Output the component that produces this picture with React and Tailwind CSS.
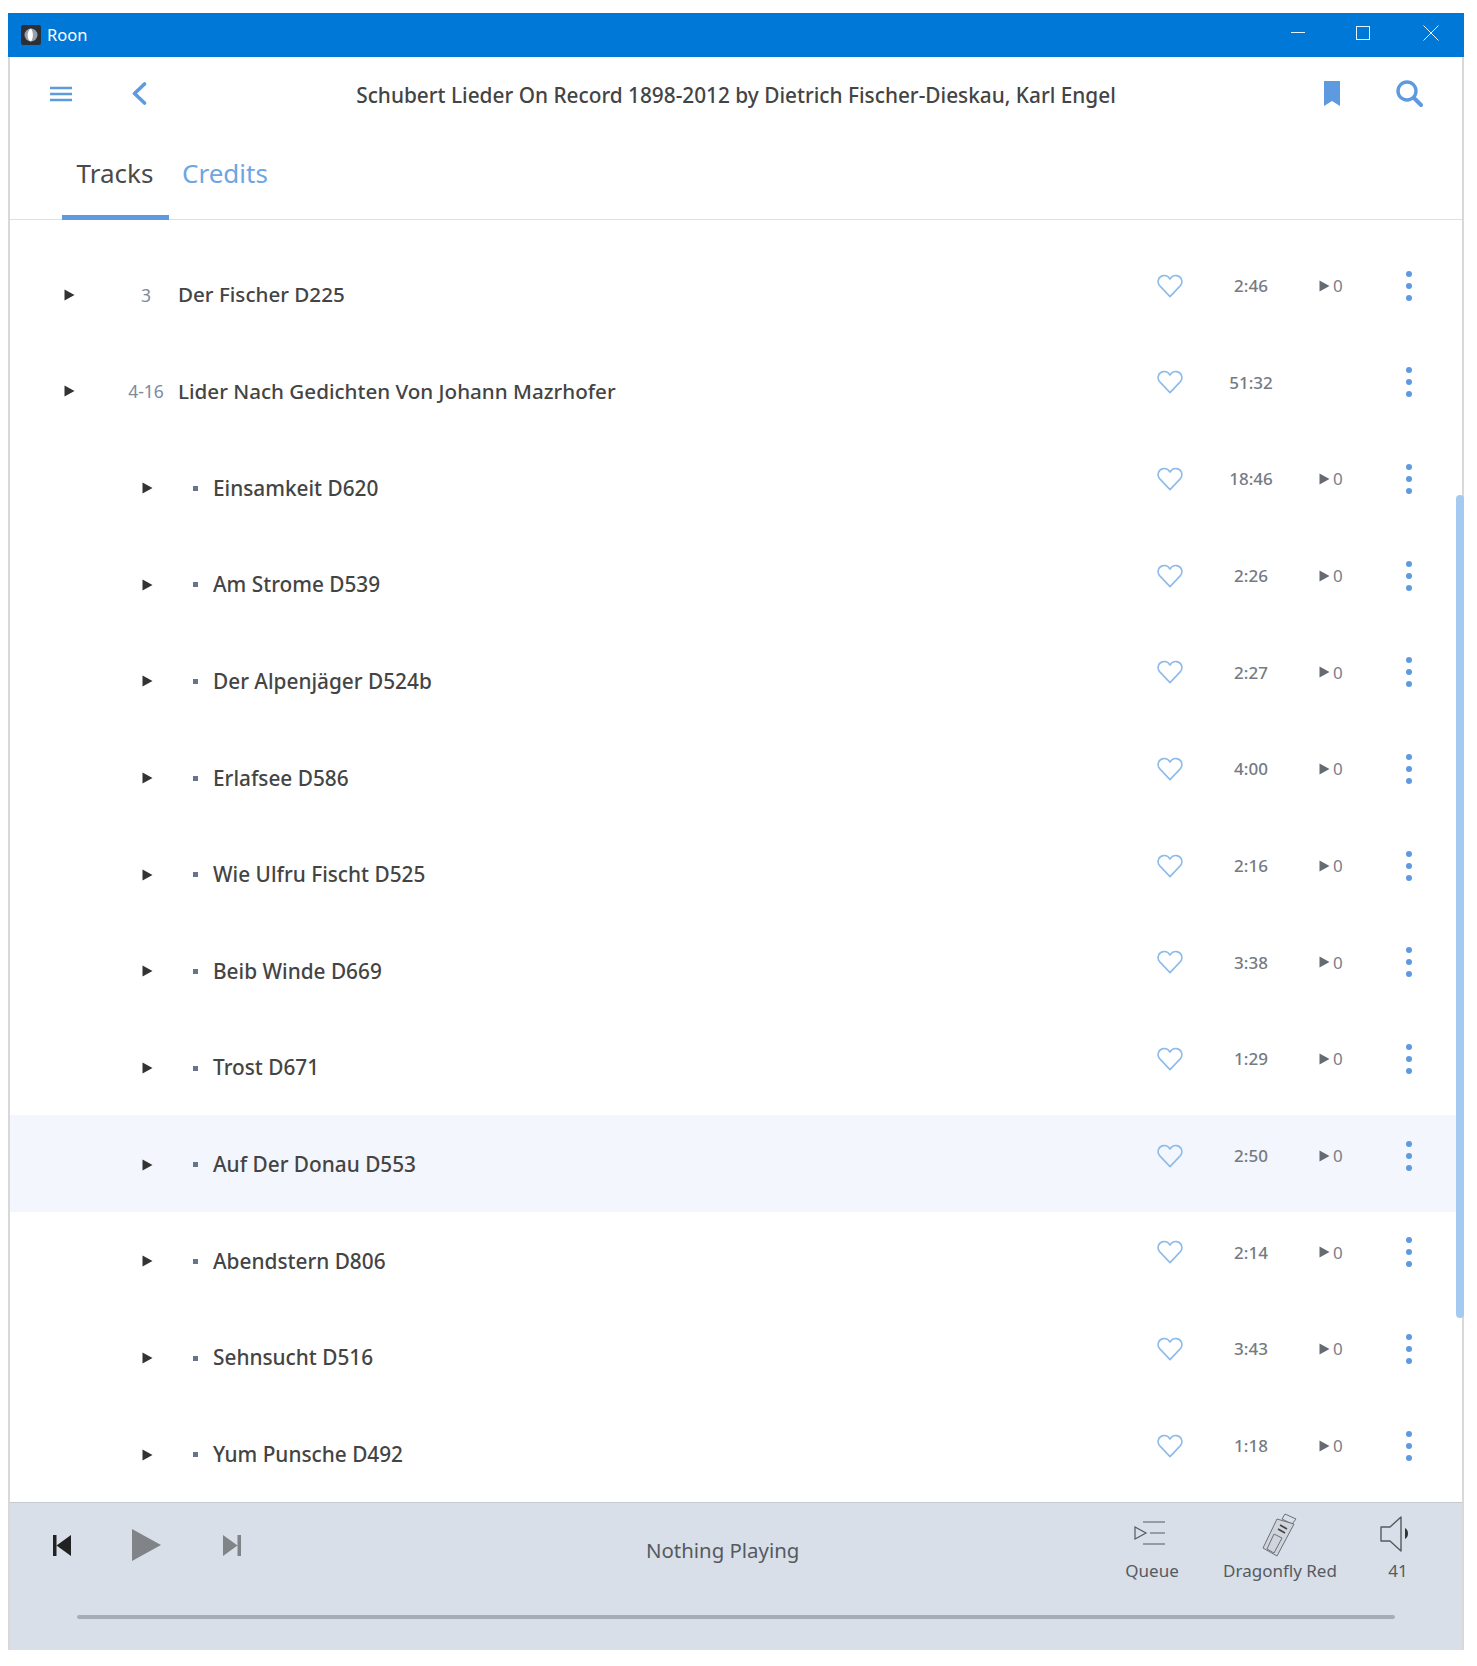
const tracks = [
    { no: '3', title: 'Der Fischer D225', time: '2:46', plays: true },
    { no: '4-16', title: 'Lider Nach Gedichten Von Johann Mazrhofer', time: '51:32', plays: false },
    { sub: true, title: 'Einsamkeit D620', time: '18:46', plays: true },
    { sub: true, title: 'Am Strome D539', time: '2:26', plays: true },
    { sub: true, title: 'Der Alpenjäger D524b', time: '2:27', plays: true },
    { sub: true, title: 'Erlafsee D586', time: '4:00', plays: true },
    { sub: true, title: 'Wie Ulfru Fischt D525', time: '2:16', plays: true },
    { sub: true, title: 'Beib Winde D669', time: '3:38', plays: true },
    { sub: true, title: 'Trost D671', time: '1:29', plays: true },
    { sub: true, title: 'Auf Der Donau D553', time: '2:50', plays: true, active: true },
    { sub: true, title: 'Abendstern D806', time: '2:14', plays: true },
    { sub: true, title: 'Sehnsucht D516', time: '3:43', plays: true },
    { sub: true, title: 'Yum Punsche D492', time: '1:18', plays: true },
];

function Triangle({ className }) {
    return (
        <svg viewBox="0 0 11 12" className={className} fill="currentColor">
            <path d="M0.5 0.5 L10.5 6 L0.5 11.5 Z" />
        </svg>
    );
}

function Heart() {
    return (
        <svg viewBox="0 0 26 24" className="w-[26px] h-[24px] text-[#8dbbea]" fill="none" stroke="currentColor" strokeWidth="1.6" strokeLinejoin="round">
            <path d="M13 22.6 L2.6 11.6 C-0.2 8.4 1 2.4 6.4 1.6 C9.2 1.2 11.6 2.6 13 5 C14.4 2.6 16.8 1.2 19.6 1.6 C25 2.4 26.2 8.4 23.4 11.6 Z" />
        </svg>
    );
}

function TrackRow({ track }) {
    return (
        <div className={`flex items-center h-[96.67px] pt-[3px] ${track.active ? 'bg-[#f3f6fc]' : ''}`}>
            {track.sub ? (
                <>
                    <Triangle className="w-[11px] h-[12px] ml-[132px] text-[#333333]" />
                    <span className="w-[5px] h-[5px] ml-[40px] bg-[#66758c]" />
                    <span className="ml-[15px] text-[20.8px] font-medium text-[#444444]">{track.title}</span>
                </>
            ) : (
                <>
                    <Triangle className="w-[11px] h-[12px] ml-[54px] text-[#333333]" />
                    <span className="w-[60px] ml-[41px] text-center text-[17.5px] text-[#7d8a9c]">{track.no}</span>
                    <span className="ml-[2px] text-[20.6px] font-medium text-[#444444]">{track.title}</span>
                </>
            )}
            <div className="ml-auto flex items-center mb-[18px]">
                <Heart />
                <span className="w-[136px] text-center text-[17px] font-medium text-[#757a83]">{track.time}</span>
                <span className="w-[24px] flex items-center gap-[3px] text-[17px] text-[#7a7f88]">
                    {track.plays && (
                        <>
                            <Triangle className="w-[11px] h-[12px] shrink-0 text-[#666b73]" />
                            0
                        </>
                    )}
                </span>
                <div className="ml-[63px] mr-[50px] flex flex-col gap-[6px]">
                    <span className="w-[6px] h-[6px] rounded-full bg-[#5e9ae0]" />
                    <span className="w-[6px] h-[6px] rounded-full bg-[#5e9ae0]" />
                    <span className="w-[6px] h-[6px] rounded-full bg-[#5e9ae0]" />
                </div>
            </div>
        </div>
    );
}

export default function App() {
    return (
        <div className="w-[1477px] h-[1666px] bg-white pl-[8px] pt-[13px] font-['Noto_Sans',sans-serif]">
            <div className="relative w-[1456px] h-[1637px] flex flex-col border-x-2 border-x-[#d8d8d8] border-b border-b-[#d8dfe8]">
                {/* title bar */}
                <div className="-mx-[2px] h-[44px] shrink-0 flex items-center bg-[#0078d7] text-white">
                    <svg viewBox="0 0 20 20" className="w-[20px] h-[20px] ml-[13px]">
                        <rect width="20" height="20" rx="2" fill="#2a2f38" />
                        <circle cx="10" cy="10" r="6.5" fill="#9aa0a8" />
                        <path d="M10 3.5 C6 5 5 15 10 16.5 C12.5 13 12.5 7 10 3.5 Z" fill="#ffffff" />
                    </svg>
                    <span className="ml-[6px] text-[16.5px]">Roon</span>
                    <svg viewBox="0 0 148 16" className="w-[148px] h-[16px] ml-auto mr-[25px] mb-[4px]" fill="none" stroke="#ffffff" strokeOpacity="0.9" strokeWidth="1">
                        <path d="M0 7.5 H14" />
                        <rect x="65.5" y="1.5" width="13" height="13" />
                        <path d="M132.5 0.5 L147.5 15.5 M147.5 0.5 L132.5 15.5" />
                    </svg>
                </div>

                {/* header */}
                <div className="h-[78px] shrink-0 flex items-center">
                    <svg viewBox="0 0 22 16" className="w-[22px] h-[16px] ml-[40px] mb-[5px]" stroke="#5e9ae0" strokeWidth="2.4">
                        <path d="M0 2 H22 M0 8 H22 M0 14 H22" />
                    </svg>
                    <svg viewBox="0 0 15 23" className="w-[15px] h-[23px] ml-[60px] mb-[5px]" fill="none" stroke="#5e9ae0" strokeWidth="3.6" strokeLinecap="round" strokeLinejoin="round">
                        <path d="M12.5 2 L2.5 11.5 L12.5 21" />
                    </svg>
                    <div className="flex-1 text-center text-[20.8px] font-medium text-[#444444] pl-[111px] pr-[110px] whitespace-nowrap">
                        Schubert Lieder On Record 1898-2012 by Dietrich Fischer-Dieskau, Karl Engel
                    </div>
                    <svg viewBox="0 0 16 25" className="w-[16px] h-[25px] mb-[6px]" fill="#5e9ae0">
                        <path d="M0 0 H16 V25 L8 20 L0 25 Z" />
                    </svg>
                    <svg viewBox="0 0 27 27" className="w-[27px] h-[27px] ml-[56px] mr-[39px] mb-[6px]" fill="none" stroke="#5e9ae0" strokeLinecap="round">
                        <circle cx="11" cy="11" r="9" strokeWidth="3.4" />
                        <path d="M18 18 L25 25" strokeWidth="4" />
                    </svg>
                </div>

                {/* tabs */}
                <div className="h-[85px] shrink-0 flex border-b border-[#dcdfe3]">
                    <div className="ml-[52px] w-[107px] h-[85px] flex justify-center items-center pb-[4px] pr-[1px] border-b-[5px] border-[#5e9ae0] text-[26px] text-[#4a4a4a]">Tracks</div>
                    <div className="ml-[13px] h-[85px] flex items-center pb-[9px] text-[26px] text-[#6ea5e3]">Credits</div>
                </div>

                {/* track list */}
                <div className="flex-1 overflow-hidden pt-[25px]">
                    {tracks.map((track) => (
                        <TrackRow key={track.title} track={track} />
                    ))}
                </div>
                <div className="absolute right-[-2px] top-[482px] w-[8px] h-[823px] rounded-[4px] bg-[#a5caf1]" />

                {/* player bar */}
                <div className="h-[147px] shrink-0 bg-[#d8dfe8] border-t border-[#c5cad2]">
                    <div className="h-[106px] flex items-center">
                        <svg viewBox="0 0 18 21" className="w-[18px] h-[21px] ml-[43px] mb-[22px]" fill="#222222">
                            <path d="M0 0 H3.5 V21 H0 Z M18 0 V21 L3.5 10.5 Z" />
                        </svg>
                        <svg viewBox="0 0 29 32" className="w-[29px] h-[32px] ml-[61px] mb-[22px]" fill="#808488">
                            <path d="M0 0 L29 16 L0 32 Z" />
                        </svg>
                        <svg viewBox="0 0 18 21" className="w-[18px] h-[21px] ml-[62px] mb-[22px]" fill="#808488">
                            <path d="M14.5 0 H18 V21 H14.5 Z M0 0 V21 L14.5 10.5 Z" />
                        </svg>
                        <div className="ml-[405px] mb-[12px] text-[20.4px] text-[#555a61] whitespace-nowrap">Nothing Playing</div>
                        <div className="ml-auto self-start mt-[7px] flex items-start text-[17px] leading-[25px] text-[#555a61]">
                            <div className="flex flex-col items-center w-[70px]">
                                <div className="h-[48px] flex items-center">
                                    <svg viewBox="0 0 32 24" className="w-[32px] h-[24px] mb-[2px] mr-[4px]" fill="none" stroke="#555a61" strokeWidth="1.2">
                                        <path d="M9 1 H31 M16 12 H31 M9 23 H31 M1 6 L12 12 L1 18 Z" />
                                    </svg>
                                </div>
                                Queue
                            </div>
                            <div className="flex flex-col items-center w-[114px] ml-[36px]">
                                <div className="h-[48px] flex items-center">
                                    <svg viewBox="0 0 36 46" className="w-[36px] h-[46px]" fill="none" stroke="#6b7077" strokeWidth="1">
                                        <path d="M23 3 L34 8 L30 13 L20 8 Z" />
                                        <path d="M15 8 L32 13 L15 45 L1 37 Z" fill="#d0d5dd" />
                                        <path d="M12 23 L20 27 L12 42 L5 38 Z" />
                                        <path d="M18 14 L25 18 M16 18 L23 22" stroke="#444444" strokeWidth="1.6" />
                                    </svg>
                                </div>
                                Dragonfly Red
                            </div>
                            <div className="flex flex-col items-center w-[40px] ml-[41px] mr-[44px]">
                                <div className="h-[48px] flex items-center">
                                    <svg viewBox="0 0 32 36" className="w-[32px] h-[36px] mr-[4px]" fill="none" stroke="#555a61" strokeWidth="1.4" strokeLinejoin="round">
                                        <path d="M1 11 H10 L21 1 V35 L10 25 H1 Z" />
                                        <path d="M25 12 C29 14 29 21 25 23 Z" fill="#333333" stroke="none" />
                                    </svg>
                                </div>
                                41
                            </div>
                        </div>
                    </div>
                    <div className="ml-[67px] w-[1318px] h-[4px] mt-[6px] rounded-full bg-[#a8adb5]" />
                </div>
            </div>
        </div>
    );
}
